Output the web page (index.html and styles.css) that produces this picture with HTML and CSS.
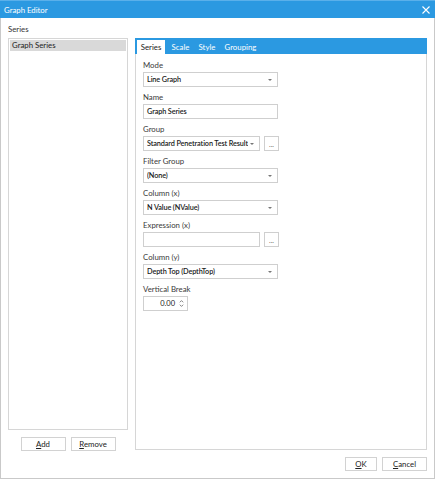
FILE: index.html
```html
<!DOCTYPE html>
<html>
<head>
<meta charset="utf-8">
<link rel="stylesheet" href="styles.css">
</head>
<body>
<div class="window">
  <div class="titlebar">
    <span class="title">Graph Editor</span>
    <svg class="close" width="8" height="8" viewBox="0 0 8 8"><path d="M0.5 0.5L7.5 7.5M7.5 0.5L0.5 7.5" stroke="#fff" stroke-width="1.1"/></svg>
  </div>
  <div class="main">
    <div class="left">
      <div class="left-label">Series</div>
      <div class="listbox">
        <div class="list-item selected">Graph Series</div>
      </div>
      <div class="left-buttons">
        <button class="btn btn-add"><u>A</u>dd</button>
        <button class="btn btn-remove"><u>R</u>emove</button>
      </div>
    </div>
    <div class="panel">
      <div class="tabs">
        <div class="tab active">Series</div>
        <div class="tab">Scale</div>
        <div class="tab">Style</div>
        <div class="tab">Grouping</div>
      </div>
      <div class="form">
        <div class="field">
          <div class="label">Mode</div>
          <div class="combo"><span>Line Graph</span><i class="arrow"></i></div>
        </div>
        <div class="field">
          <div class="label">Name</div>
          <div class="textbox">Graph Series</div>
        </div>
        <div class="field">
          <div class="label">Group</div>
          <div class="row">
            <div class="combo short"><span>Standard Penetration Test Result</span><i class="arrow"></i></div>
            <div class="dots">...</div>
          </div>
        </div>
        <div class="field">
          <div class="label">Filter Group</div>
          <div class="combo"><span>(None)</span><i class="arrow"></i></div>
        </div>
        <div class="field">
          <div class="label">Column (x)</div>
          <div class="combo"><span>N Value (NValue)</span><i class="arrow"></i></div>
        </div>
        <div class="field">
          <div class="label">Expression (x)</div>
          <div class="row">
            <div class="textbox short"></div>
            <div class="dots">...</div>
          </div>
        </div>
        <div class="field">
          <div class="label">Column (y)</div>
          <div class="combo"><span>Depth Top (DepthTop)</span><i class="arrow"></i></div>
        </div>
        <div class="field">
          <div class="label">Vertical Break</div>
          <div class="numeric"><span>0.00</span>
            <svg class="spin" width="5" height="9" viewBox="0 0 5 9"><path d="M0.8 3.3L2.5 1.6L4.2 3.3M0.8 5.7L2.5 7.4L4.2 5.7" fill="none" stroke="#666" stroke-width="0.8"/></svg>
          </div>
        </div>
      </div>
    </div>
  </div>
  <div class="footer">
    <button class="btn btn-ok"><u>O</u>K</button>
    <button class="btn btn-cancel"><u>C</u>ancel</button>
  </div>
</div>
</body>
</html>
```
FILE: styles.css
```css
* { box-sizing: border-box; }
html, body { margin: 0; padding: 0; background: #fff; }
body {
  font-family: "Lato", "Open Sans", sans-serif;
  font-size: 7.8px;
  color: #222;
  width: 435px;
  height: 479px;
  overflow: hidden;
}
.window {
  width: 435px;
  height: 479px;
  border: 1px solid #c9c9c9;
  border-top: none;
  display: flex;
  flex-direction: column;
}
.titlebar {
  height: 18px;
  background: #2b99e1;
  border-top: 1px solid #5ab0ea;
  margin: 0 -1px;
  display: flex;
  align-items: center;
  justify-content: space-between;
  padding: 0 5px 0 4px;
  color: #fff;
}
.title { font-size: 7.8px; }
.close { display: block; }
.main {
  display: flex;
  gap: 7px;
  padding: 0 6px 0 7px;
}
.left {
  width: 120px;
  display: flex;
  flex-direction: column;
}
.left-label {
  height: 20px;
  line-height: 22px;
  color: #333;
}
.listbox {
  height: 392px;
  border: 1px solid #d6d6d6;
  padding: 1px;
}
.list-item {
  height: 11px;
  line-height: 11px;
  padding-left: 2px;
}
.list-item.selected { background: #d9d9d9; }
.left-buttons {
  display: flex;
  justify-content: center;
  gap: 5px;
  margin-top: 7px;
}
.btn {
  font-family: inherit;
  font-size: 7.8px;
  color: #222;
  background: #fff;
  border: 1px solid #d2d2d2;
  height: 14px;
  padding: 0;
  line-height: 12px;
}
.btn u { text-decoration-thickness: 0.7px; text-underline-offset: 1px; }
.btn-add { width: 45px; }
.btn-remove { width: 45px; }
.panel {
  margin-top: 20px;
  width: 292px;
  height: 412px;
  border: 1px solid #d6d6d6;
  border-top: none;
}
.tabs {
  height: 16px;
  background: #2b99e1;
  margin: 0 -1px;
  display: flex;
  align-items: flex-end;
  padding-left: 2px;
}
.tab {
  color: #fff;
  height: 14px;
  line-height: 14px;
  padding: 0 4.6px;
}
.tab.active {
  background: #fff;
  color: #222;
  width: 28px;
  padding: 0;
  text-align: center;
  margin-right: 2px;
}
.form {
  padding: 6px 0 0 7px;
}
.field {
  margin-bottom: 5px;
}
.label {
  height: 12px;
  line-height: 11px;
  color: #3a3a3a;
}
.row { display: flex; gap: 4px; }
.combo, .textbox {
  width: 135px;
  height: 15px;
  border: 1px solid #cfcfcf;
  display: flex;
  align-items: center;
  padding: 0 3px;
  font-weight: 600;
  font-size: 7.3px;
  letter-spacing: -0.12px;
  white-space: nowrap;
  overflow: hidden;
  color: #1a1a1a;
}
.combo span { flex: 1; overflow: hidden; }
.combo.short, .textbox.short { width: 117px; }
.arrow {
  display: block;
  width: 0;
  height: 0;
  border-left: 2px solid transparent;
  border-right: 2px solid transparent;
  border-top: 2.5px solid #777;
  margin: 0 2px 0 2px;
  flex: none;
}
.dots {
  width: 15px;
  height: 15px;
  border: 1px solid #cfcfcf;
  text-align: center;
  line-height: 15px;
  font-size: 7px;
  color: #666;
}
.numeric {
  width: 45px;
  height: 15px;
  border: 1px solid #cfcfcf;
  display: flex;
  align-items: center;
  justify-content: flex-end;
  padding: 0 3px;
  gap: 4px;
  font-size: 7.5px;
}
.spin { display: block; }
.footer {
  display: flex;
  justify-content: flex-end;
  gap: 5px;
  padding: 6px 7px 0 0;
}
.btn-ok { width: 32px; }
.btn-cancel { width: 45px; }
```
